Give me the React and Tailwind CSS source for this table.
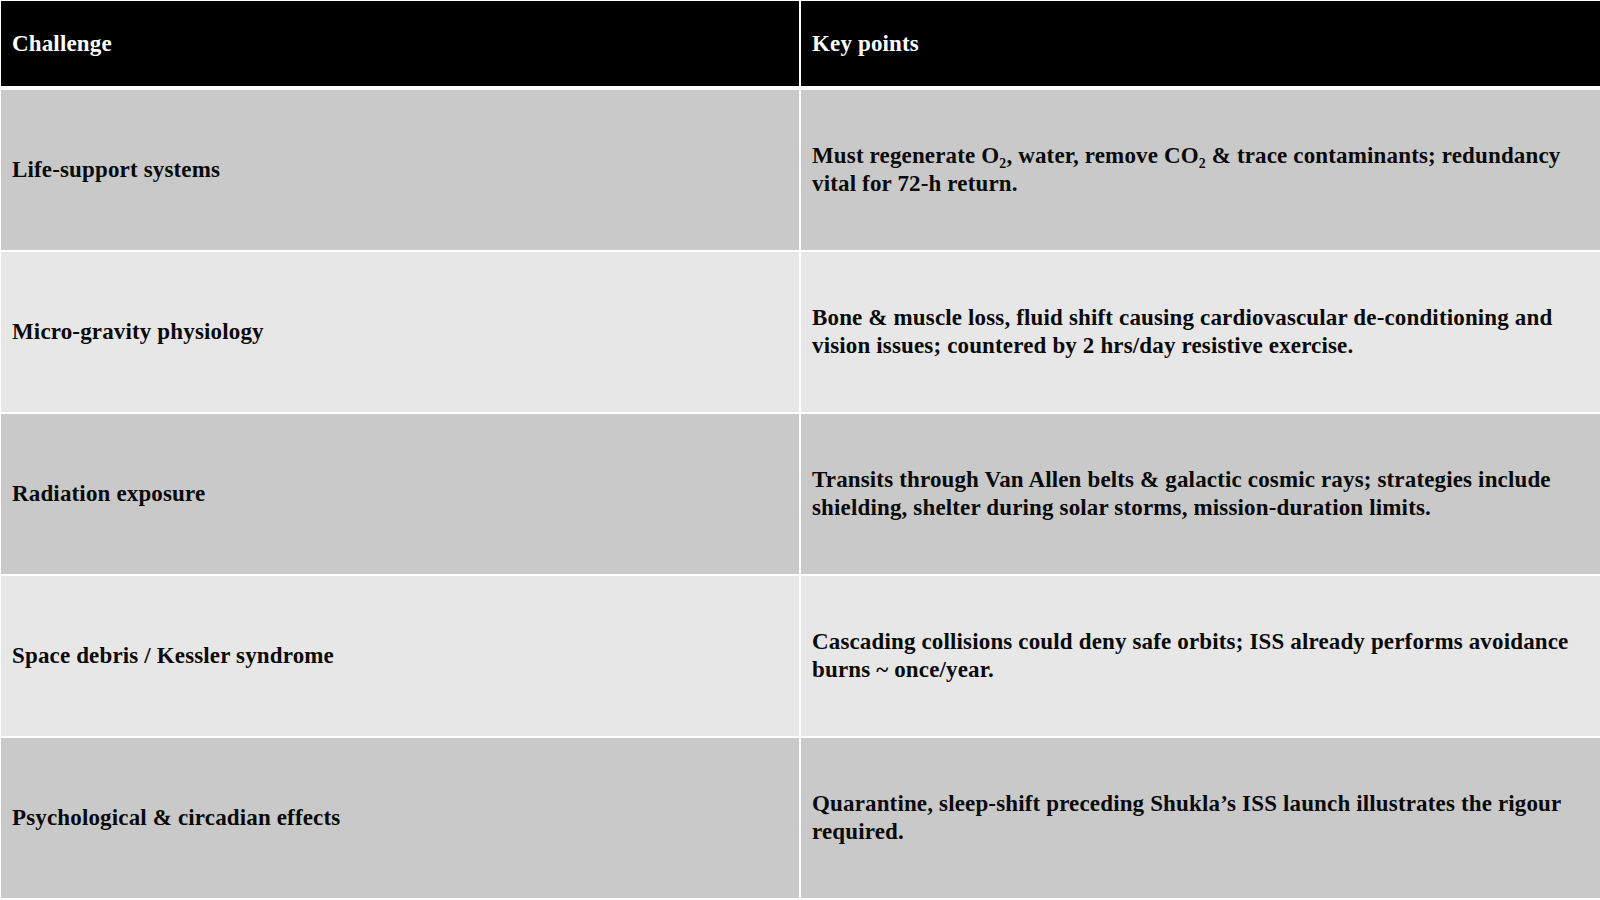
const ROWS = [
  {
    challenge: 'Life-support systems',
    points: 'Must regenerate O₂, water, remove CO₂ & trace contaminants; redundancy vital for 72-h return.',
  },
  {
    challenge: 'Micro-gravity physiology',
    points: 'Bone & muscle loss, fluid shift causing cardiovascular de-conditioning and vision issues; countered by 2 hrs/day resistive exercise.',
  },
  {
    challenge: 'Radiation exposure',
    points: 'Transits through Van Allen belts & galactic cosmic rays; strategies include shielding, shelter during solar storms, mission-duration limits.',
  },
  {
    challenge: 'Space debris / Kessler syndrome',
    points: 'Cascading collisions could deny safe orbits; ISS already performs avoidance burns ~ once/year.',
  },
  {
    challenge: 'Psychological & circadian effects',
    points: 'Quarantine, sleep-shift preceding Shukla’s ISS launch illustrates the rigour required.',
  },
];

const App = () => {
  return (
    <div className="min-h-screen bg-white pl-px pt-px font-['Liberation_Serif','Times_New_Roman',serif] text-[23px] leading-[1.2] font-bold tracking-[0.15px]">
      <div className="grid grid-cols-[798px_1fr] gap-[2px]">
        <div className="h-[85px] mb-[2px] bg-black text-white flex items-center px-[11px]">Challenge</div>
        <div className="h-[85px] mb-[2px] bg-black text-white flex items-center px-[11px]">Key points</div>

        {ROWS.map((row, i) => {
          const bg = i % 2 === 0 ? 'bg-[#c9c9c9]' : 'bg-[#e7e7e7]';
          return [
            <div key={`c${i}`} className={`h-[160px] ${bg} text-[#0a0a0a] flex items-center px-[11px]`}>
              {row.challenge}
            </div>,
            <div key={`p${i}`} className={`h-[160px] ${bg} text-[#0a0a0a] flex items-center px-[11px]`}>
              <p>{row.points}</p>
            </div>,
          ];
        })}
      </div>
    </div>
  );
};

export default App;
